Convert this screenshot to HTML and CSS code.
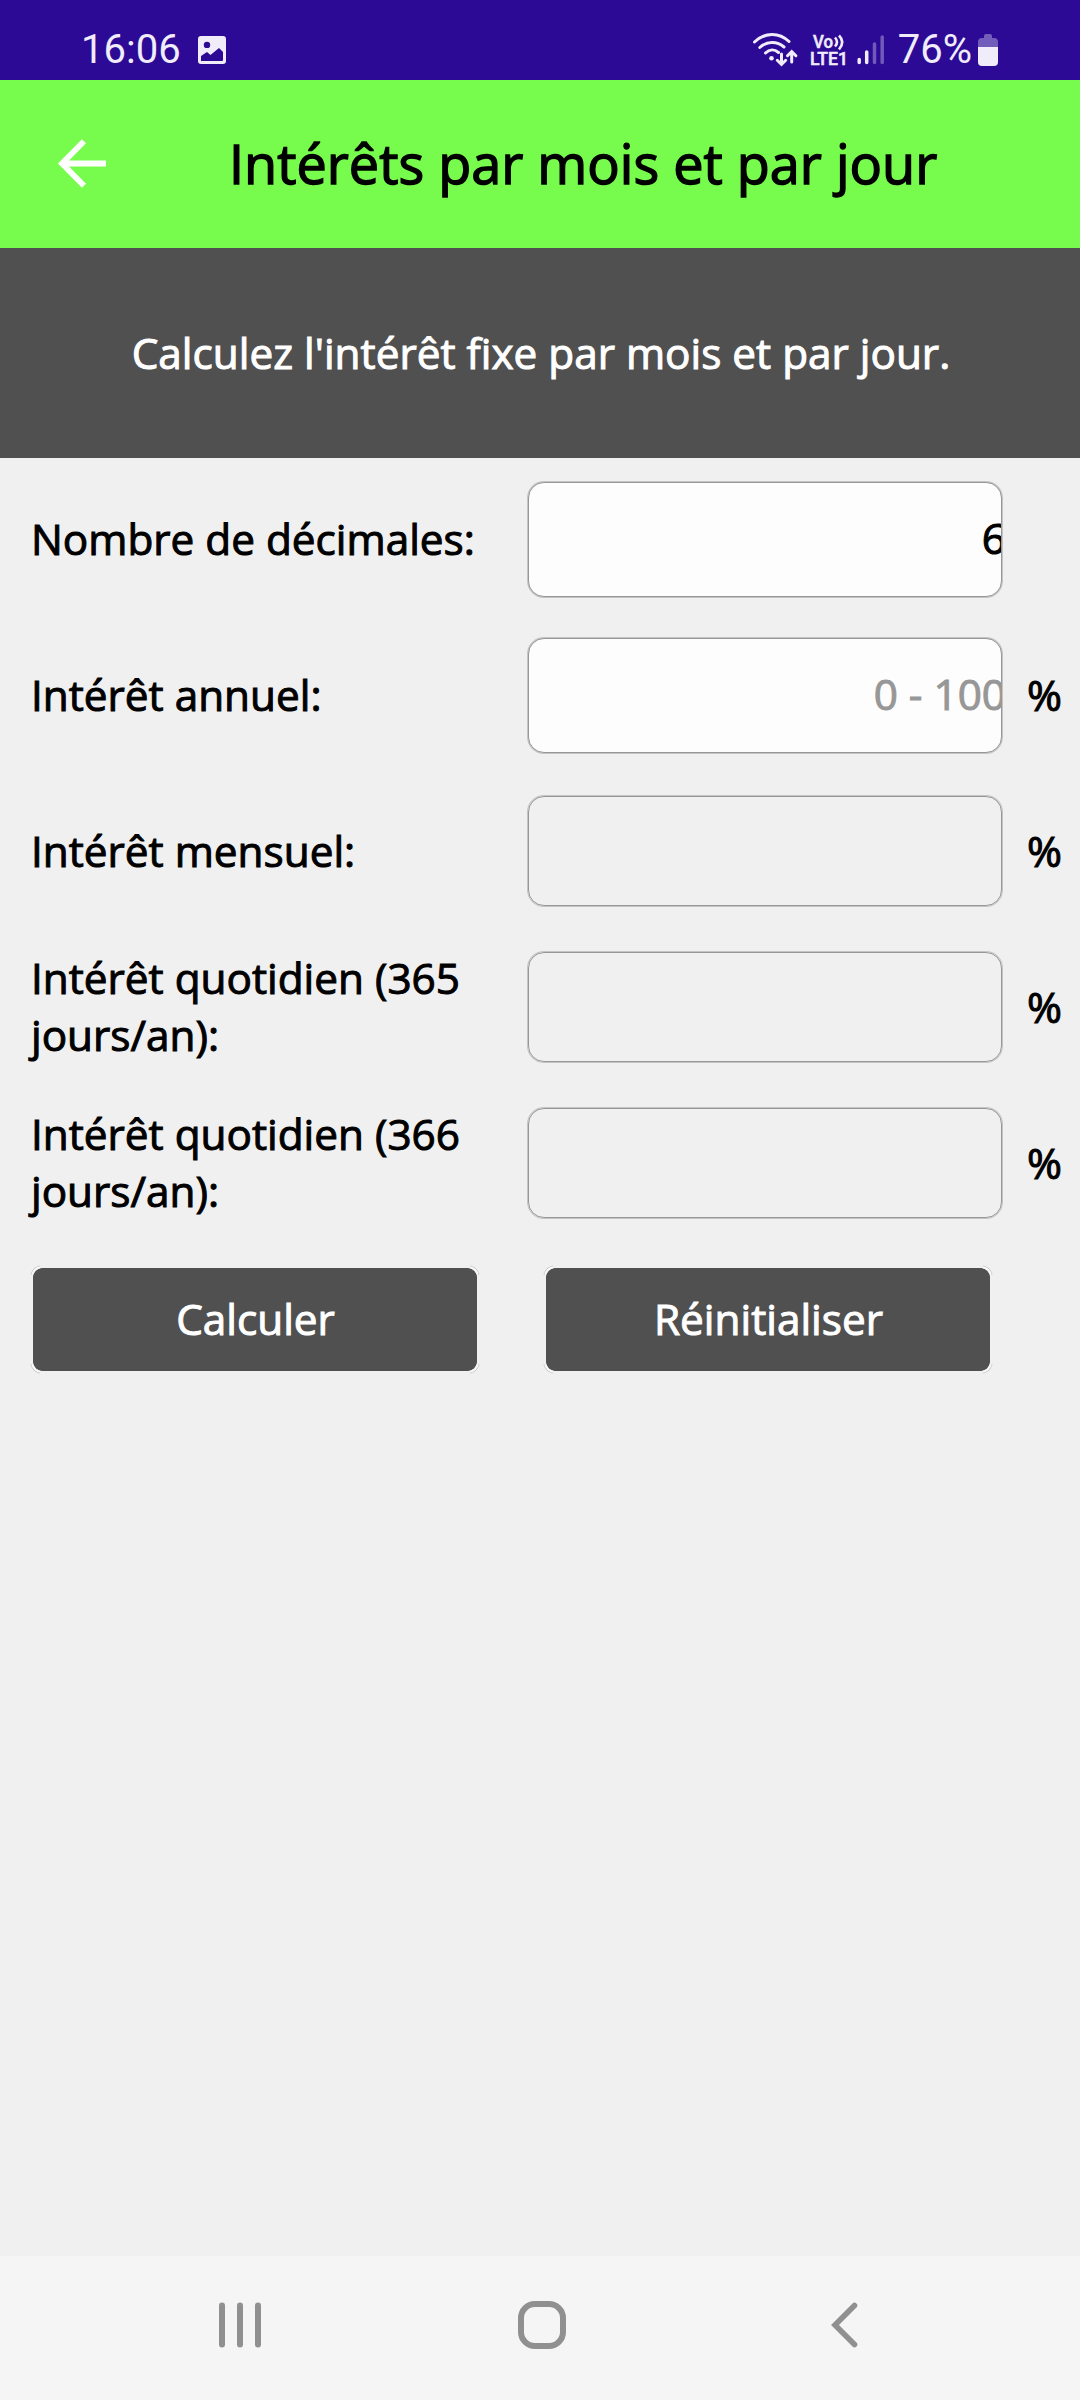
FILE: index.html
```html
<!DOCTYPE html>
<html lang="fr">
<head>
<meta charset="utf-8">
<title>Intérêts par mois et par jour</title>
<link rel="stylesheet" href="styles.css">
</head>
<body>
<div class="status">
  <span class="status-text">16:06</span>
  <svg class="picture" width="28" height="28" viewBox="0 0 28 28"><path fill="currentColor" fill-rule="evenodd" d="M3 0H25Q28 0 28 3V25Q28 28 25 28H3Q0 28 0 25V3Q0 0 3 0ZM9 5.700A3.200 3.200 0 1 0 9 12.100A3.200 3.200 0 1 0 9 5.700ZM3 20V25H24Q25 25 25 24V16L21 12L12.500 19L9 16Z"/></svg>
  <svg class="wifi" width="44" height="34" viewBox="0 0 44 34" fill="none" stroke="currentColor" stroke-width="3" stroke-linecap="round"><path d="M1.500 9C12 -1 26 -1 36 8.500M6.800 14.500C14 8 24 8 31 14M12.500 20C16.500 16 21.500 16 25.500 19.500"/><circle cx="18.500" cy="25.200" r="2.300" fill="currentColor" stroke="none"/><path d="M28.500 21V31M24.300 27.300L28.500 31.500L32.700 27.300M38.700 29V19M34.500 22.700L38.700 18.500L42.900 22.700"/></svg>
  <svg class="volte" width="40" height="34" viewBox="0 0 40 34" fill="currentColor"><text class="tiny" x="3" y="14.500" textLength="20" lengthAdjust="spacingAndGlyphs">Vo</text><text class="tiny" x="0" y="32" textLength="38" lengthAdjust="spacingAndGlyphs">LTE1</text><path d="M25 4.500Q29 9 25 13.500M29 2.500Q35.500 9 29 16.500" fill="none" stroke="currentColor" stroke-width="2.600"/></svg>
  <svg class="signal" width="28" height="30" viewBox="0 0 28 30" stroke="currentColor" stroke-width="3.500" stroke-linecap="round"><path d="M2.200 24.500V27.500M9.700 17V27.500"/><path opacity=".35" d="M17.500 9V27.500M25.200 2V27.500"/></svg>
  <span class="status-text">76%</span>
  <svg class="battery" width="20" height="32" viewBox="0 0 20 32" fill="currentColor"><path opacity=".37" d="M0 13V8Q0 4 4 4H6V2Q6 0 8 0H12Q14 0 14 2V4H16Q20 4 20 8V13Z"/><path d="M0 13H20V28Q20 32 16 32H4Q0 32 0 28Z"/></svg>
</div>
<header class="header">
  <svg class="back" width="49" height="49" viewBox="0 0 49 49" fill="none" stroke="#fff" stroke-width="5.800"><path d="M26 2.200L4 24.500L26 46.800M4 24.500H48"/></svg>
  <h1 class="title">Intérêts par mois et par jour</h1>
</header>
<p class="intro">Calculez l'intérêt fixe par mois et par jour.</p>
<main class="main">
  <div class="row"><span class="label">Nombre de décimales:</span><div class="field editable"><span class="value">6</span></div></div>
  <div class="row"><span class="label">Intérêt annuel:</span><div class="field editable"><span class="value hint">0 - 100</span></div><span class="unit">%</span></div>
  <div class="row"><span class="label">Intérêt mensuel:</span><div class="field"></div><span class="unit">%</span></div>
  <div class="row"><span class="label">Intérêt quotidien (365 jours/an):</span><div class="field"></div><span class="unit">%</span></div>
  <div class="row"><span class="label">Intérêt quotidien (366 jours/an):</span><div class="field"></div><span class="unit">%</span></div>
  <div class="actions"><button class="button">Calculer</button><button class="button">Réinitialiser</button></div>
</main>
<nav class="nav">
  <svg class="recent" width="42" height="46" viewBox="0 0 42 46" stroke="#909090" stroke-width="6" stroke-linecap="round"><path d="M3 3.500V42.500M21 3.500V42.500M39 3.500V42.500"/></svg>
  <svg class="home" width="48" height="48" viewBox="0 0 48 48" fill="none" stroke="#909090" stroke-width="6"><rect x="3" y="3" width="42" height="42" rx="14"/></svg>
  <svg class="return" width="27" height="46" viewBox="0 0 27 46" fill="none" stroke="#909090" stroke-width="5.600" stroke-linecap="round"><path d="M23.500 3.500L4 23L23.500 42.500"/></svg>
</nav>
</body>
</html>
```

FILE: styles.css
```css
* { box-sizing: border-box; }
body {
  margin: 0;
  width: 1080px;
  height: 2400px;
  display: flex;
  flex-direction: column;
  background: #f0f0f0;
  color: #000;
  font: 400 42.300px/57px "Open Sans", "Noto Sans", sans-serif;
  -webkit-text-stroke: 1px currentColor;
}
svg { display: block; flex: none; overflow: visible; }
.status {
  height: 80px;
  padding: 19px 82px 0 81px;
  display: flex;
  align-items: flex-start;
  background: #2c0a96;
  color: #f0ecfa;
  -webkit-text-stroke: 0;
}
.status-text { font: 400 40px/61px Roboto, sans-serif; white-space: nowrap; }
.picture { margin: 17px 0 0 17px; }
.wifi { margin: 14px 0 0 auto; }
.volte { margin: 14px 0 0 13px; }
.tiny { font: 500 17.500px Roboto, sans-serif; stroke: currentColor; stroke-width: 0.500px; }
.signal { margin: 16px 13px 0 7px; }
.battery { margin: 15px 0 0 6px; }
.header {
  height: 168px;
  padding: 0 0 2px 58px;
  display: flex;
  align-items: center;
  background: #77fc4d;
}
.title {
  margin: 0 0 0 122px;
  font-size: 54px;
  font-weight: 400;
  line-height: 78px;
  white-space: nowrap;
  -webkit-text-stroke-width: 1.400px;
}
.intro {
  margin: 0;
  height: 210px;
  padding: 0 0 2px 2px;
  display: flex;
  align-items: center;
  justify-content: center;
  background: #505050;
  color: #fff;
}
.main { flex: 1; padding-top: 3px; }
.row {
  height: 156px;
  padding-left: 31px;
  display: grid;
  grid-template-columns: 496px 476px 1fr;
  align-items: center;
}
.label { padding: 0 36px 2px 0; }
.unit { padding: 0 0 1px 24px; }
.field {
  height: 110px;
  margin: 0 1px;
  display: flex;
  align-items: center;
  justify-content: flex-end;
  overflow: hidden;
  border: 1px solid #979797;
  border-radius: 16px;
  box-shadow: 0 0 0 1px #c4c4c4;
}
.editable { height: 115px; background: #fdfdfd; }
.value { margin-right: -5px; padding-bottom: 4px; white-space: nowrap; }
.hint { color: #979797; -webkit-text-stroke-color: currentColor; }
.actions { display: flex; gap: 69px; padding: 27px 0 0 33px; }
.button {
  position: relative;
  width: 444px;
  height: 103px;
  padding: 0 0 2px 1px;
  border: 0;
  border-radius: 9px;
  background: #505050;
  color: #fff;
  font: inherit;
  -webkit-text-stroke: inherit;
  -webkit-text-stroke-color: currentColor;
}
/* thin highlight arcs around the four corners */
.button::before {
  content: "";
  position: absolute;
  inset: -3px;
  border: 1px solid #c8c8c8;
  border-radius: 12px;
  box-shadow: inset 0 0 0 2px #f8f8f8;
  mask:
    linear-gradient(#000 0 0) 0 0 / 10px 10px no-repeat,
    linear-gradient(#000 0 0) 100% 0 / 10px 10px no-repeat,
    linear-gradient(#000 0 0) 0 100% / 10px 10px no-repeat,
    linear-gradient(#000 0 0) 100% 100% / 10px 10px no-repeat;
}
.nav {
  height: 144px;
  padding: 0 222px 6px 219px;
  display: flex;
  align-items: center;
  background: #f5f5f5;
}
.home { margin: 0 265px 0 257px; }
```
